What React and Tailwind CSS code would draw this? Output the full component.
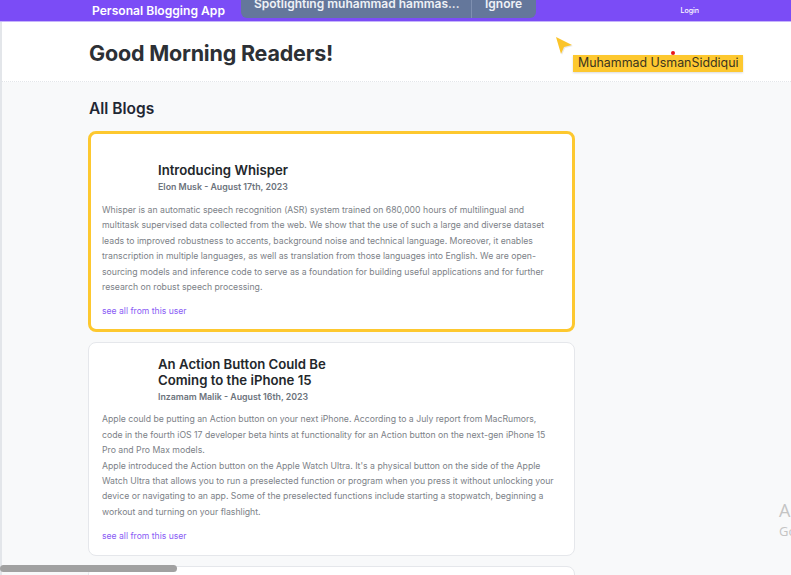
import React from 'react'

const posts = [
  {
    id: 1,
    title: 'Introducing Whisper',
    author: 'Elon Musk',
    date: 'August 17th, 2023',
    body: [
      'Whisper is an automatic speech recognition (ASR) system trained on 680,000 hours of multilingual and multitask supervised data collected from the web. We show that the use of such a large and diverse dataset leads to improved robustness to accents, background noise and technical language. Moreover, it enables transcription in multiple languages, as well as translation from those languages into English. We are open-sourcing models and inference code to serve as a foundation for building useful applications and for further research on robust speech processing.',
    ],
    spotlit: true,
  },
  {
    id: 2,
    title: 'An Action Button Could Be Coming to the iPhone 15',
    author: 'Inzamam Malik',
    date: 'August 16th, 2023',
    body: [
      'Apple could be putting an Action button on your next iPhone. According to a July report from MacRumors, code in the fourth iOS 17 developer beta hints at functionality for an Action button on the next-gen iPhone 15 Pro and Pro Max models.',
      "Apple introduced the Action button on the Apple Watch Ultra. It's a physical button on the side of the Apple Watch Ultra that allows you to run a preselected function or program when you press it without unlocking your device or navigating to an app. Some of the preselected functions include starting a stopwatch, beginning a workout and turning on your flashlight.",
    ],
  },
  {
    id: 3,
    title: '',
    author: '',
    date: '',
    body: [],
  },
]

function BlogCard({ post }) {
  return (
    <div
      className={
        'rounded-lg bg-white ' +
        (post.spotlit
          ? 'border-[3px] border-[#fdc82f] pt-[12px] pr-[13px] pb-[11px] pl-[11px]'
          : 'border border-[#e5e7eb] pt-[13px] pr-[15px] pb-[12px] pl-[13px]')
      }
    >
      <div className="flex min-h-[48px] items-end">
        <div className="h-[48px] w-[48px] shrink-0" />
        <div className="ml-[8px] w-[190px]">
          <div className="text-[13.2px] leading-4 font-semibold text-[#23272b]">{post.title}</div>
          <div className="mt-[2px] text-[8.8px] leading-[14px] font-semibold text-[#6c737c]">
            {post.author} - {post.date}
          </div>
        </div>
      </div>
      <div className={(post.spotlit ? 'mt-[9px]' : 'mt-[8px]') + ' text-[8.7px] leading-[15.4px] text-[#7c8187]'}>
        {post.body.map((p, i) => (
          <p key={i}>{p}</p>
        ))}
      </div>
      <a className="mt-[9px] block text-[8.6px] leading-[14px] text-[#8a5cf5]">see all from this user</a>
    </div>
  )
}

export default function App() {
  return (
    <div
      className="relative h-[575px] w-[791px] overflow-hidden bg-[#f8f9fa]"
      style={{ fontFamily: 'Inter, "Noto Sans", sans-serif' }}
    >
      {/* navbar */}
      <nav className="flex h-[22px] items-center border-b border-[#c6b4fb] bg-[#7b4cf6] pt-[2px] pl-[92px] pr-[92px]">
        <span className="text-[12.1px] font-semibold text-white">Personal Blogging App</span>
        <span className="ml-auto text-[7px] font-medium text-white">Login</span>
      </nav>

      <div className="border-l-2 border-[#e3e6ea]">
        <header className="flex h-[60px] items-center border-b border-dotted border-[#e3e6ea] bg-white pt-[3px] pl-[87px]">
          <h1 className="text-[21.5px] font-bold tracking-[-0.2px] text-[#2c3035]">Good Morning Readers!</h1>
        </header>

        <main className="pl-[86px] pr-[216px]">
          <h2 className="mt-[15px] mb-[10px] pl-px text-[15.5px] leading-6 font-semibold text-[#1f2733]">All Blogs</h2>
          <div className="flex flex-col gap-[10px]">
            {posts.map((p) => (
              <BlogCard key={p.id} post={p} />
            ))}
          </div>
        </main>
      </div>

      {/* spotlight toolbar overlay */}
      <div className="absolute top-[-10px] left-[241px] flex h-[28px] w-[295px] items-center rounded-b-md bg-[#64779b] text-[12px] font-semibold whitespace-nowrap text-[#eef1f6]">
        <span className="w-[230px] pl-[13px]">Spotlighting muhammad hammas...</span>
        <span className="h-full w-px bg-[#7e8fb0]" />
        <span className="pl-[13px]">Ignore</span>
      </div>

      {/* pointer cursor + name tag */}
      <svg className="absolute top-[34px] left-[553px]" width="22" height="22" viewBox="0 0 22 22">
        <path d="M3 3 L19 11 L11 13 L8 20 Z" fill="#d9d9d9" opacity="0.6" transform="translate(1 1)" />
        <path d="M3 3 L19 11 L11 13 L8 20 Z" fill="#fbc42a" />
      </svg>
      <div className="absolute top-[51px] left-[671px] h-[4px] w-[4px] rounded-full bg-[#e8171b]" />
      <div className="absolute top-[55px] left-[573px] flex h-[17px] items-center bg-[#fdc82f] px-[5px] text-[12.4px] whitespace-nowrap text-[#3b3520] shadow-[0_1px_2px_rgba(0,0,0,0.15)]">
        Muhammad UsmanSiddiqui
      </div>

      {/* windows watermark */}
      <div
        className="absolute top-[498px] left-[779px] whitespace-nowrap text-[#c4c4c4]"
        style={{ fontFamily: '"Open Sans", "Noto Sans", sans-serif' }}
      >
        <div className="text-[18px] leading-[24px]">Activate Windows</div>
        <div className="text-[13px] leading-[18px]">Go to Settings to activate Windows.</div>
      </div>

      {/* horizontal scrollbar */}
      <div className="absolute top-[565px] left-0 h-[7px] w-[177px] rounded-full bg-[#a1a1a1]" />
    </div>
  )
}
